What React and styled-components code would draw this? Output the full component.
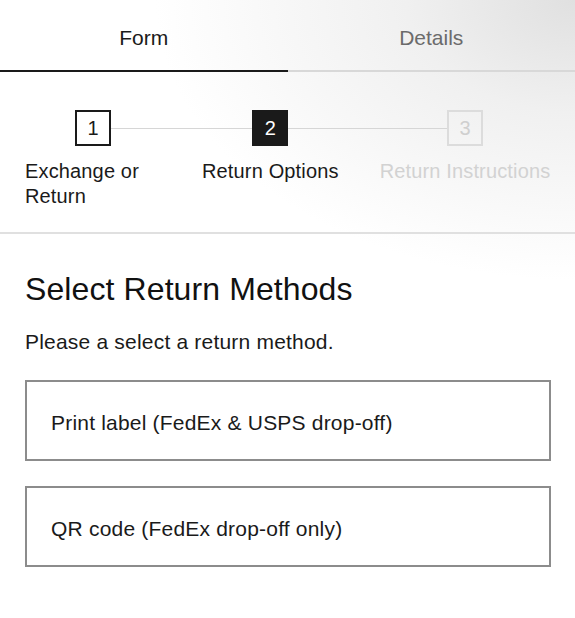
import styled, { createGlobalStyle } from "styled-components";

const GlobalStyle = createGlobalStyle`
    body {
        margin: 0;
        background: #fff;
        font-family: "Liberation Sans", Arial, sans-serif;
        color: #1a1a1a;
    }
`;

const Page = styled.div`
    width: 575px;
    min-height: 618px;
    background:
        radial-gradient( ellipse 420px 280px at 100% 0, #e0e0e0 0%, #f0f0f0 40%, rgba( 255, 255, 255, 0 ) 100% ),
        #fff;
`;

const TabBar = styled.nav`
    display: flex;
`;

const Tab = styled.div`
    flex: 1;
    height: 44px;
    padding-top: 26px;
    display: flex;
    justify-content: center;
    font-size: 21px;
    line-height: 24px;
    color: ${ ( { active } ) => active ? "#1a1a1a" : "#6b6b6b" };
    border-bottom: 2px solid ${ ( { active } ) => active ? "#1a1a1a" : "#d8d8d8" };
`;

const Steps = styled.div`
    position: relative;
    display: flex;
    gap: 41px;
    padding: 38px 0 23px 25px;
    border-bottom: 2px solid #e0e0e0;

    &::before {
        content: "";
        position: absolute;
        top: 56px;
        left: 111px;
        right: 128px;
        height: 1px;
        background: #d6d6d6;
    }
`;

const Step = styled.div`
    flex: none;
    display: flex;
    flex-direction: column;
    align-items: center;
    width: ${ ( { width } ) => width ? `${ width }px` : "max-content" };
`;

const stepColors = {
    done: { border: "#1a1a1a", fill: "transparent", text: "#1a1a1a", label: "#1a1a1a" },
    active: { border: "#1a1a1a", fill: "#1a1a1a", text: "#fff", label: "#1a1a1a" },
    todo: { border: "#dcdcdc", fill: "transparent", text: "#cfcfcf", label: "#d2d2d2" },
};

const StepBox = styled.div`
    position: relative;
    box-sizing: border-box;
    width: 36px;
    height: 36px;
    display: flex;
    align-items: center;
    justify-content: center;
    font-size: 20px;
    border: 2px solid ${ ( { state } ) => stepColors[ state ].border };
    background: ${ ( { state } ) => stepColors[ state ].fill };
    color: ${ ( { state } ) => stepColors[ state ].text };
`;

const StepLabel = styled.div`
    align-self: stretch;
    margin-top: 13px;
    font-size: 20px;
    line-height: 25px;
    letter-spacing: 0.15px;
    color: ${ ( { state } ) => stepColors[ state ].label };
`;

const Content = styled.section`
    padding: 36px 24px 40px 25px;
`;

const Heading = styled.h1`
    margin: 0;
    font-size: 32px;
    font-weight: normal;
    line-height: 38px;
    letter-spacing: 0.1px;
    color: #111;
`;

const Hint = styled.p`
    margin: 22px 0 26px;
    font-size: 21px;
    line-height: 24px;
    letter-spacing: 0.2px;
`;

const Methods = styled.div`
    display: flex;
    flex-direction: column;
    gap: 25px;
`;

const MethodOption = styled.button`
    box-sizing: border-box;
    height: 81px;
    padding: 4px 24px 0;
    display: flex;
    align-items: center;
    text-align: left;
    background: #fff;
    border: 2px solid #8c8c8c;
    font-family: inherit;
    font-size: 21px;
    line-height: 24px;
    letter-spacing: 0.2px;
    color: #1a1a1a;
    cursor: pointer;
`;

const steps = [
    { number: 1, label: "Exchange or Return", state: "done", width: 136 },
    { number: 2, label: "Return Options", state: "active" },
    { number: 3, label: "Return Instructions", state: "todo" },
];

const methods = [
    "Print label (FedEx & USPS drop-off)",
    "QR code (FedEx drop-off only)",
];

export default function App() {
    return <Page>
        <GlobalStyle />
        <TabBar>
            <Tab active>Form</Tab>
            <Tab>Details</Tab>
        </TabBar>
        <Steps>
            { steps.map( step => <Step key={ step.number } width={ step.width }>
                <StepBox state={ step.state }>{ step.number }</StepBox>
                <StepLabel state={ step.state }>{ step.label }</StepLabel>
            </Step> ) }
        </Steps>
        <Content>
            <Heading>Select Return Methods</Heading>
            <Hint>Please a select a return method.</Hint>
            <Methods>
                { methods.map( method => <MethodOption key={ method }>{ method }</MethodOption> ) }
            </Methods>
        </Content>
    </Page>;
}
